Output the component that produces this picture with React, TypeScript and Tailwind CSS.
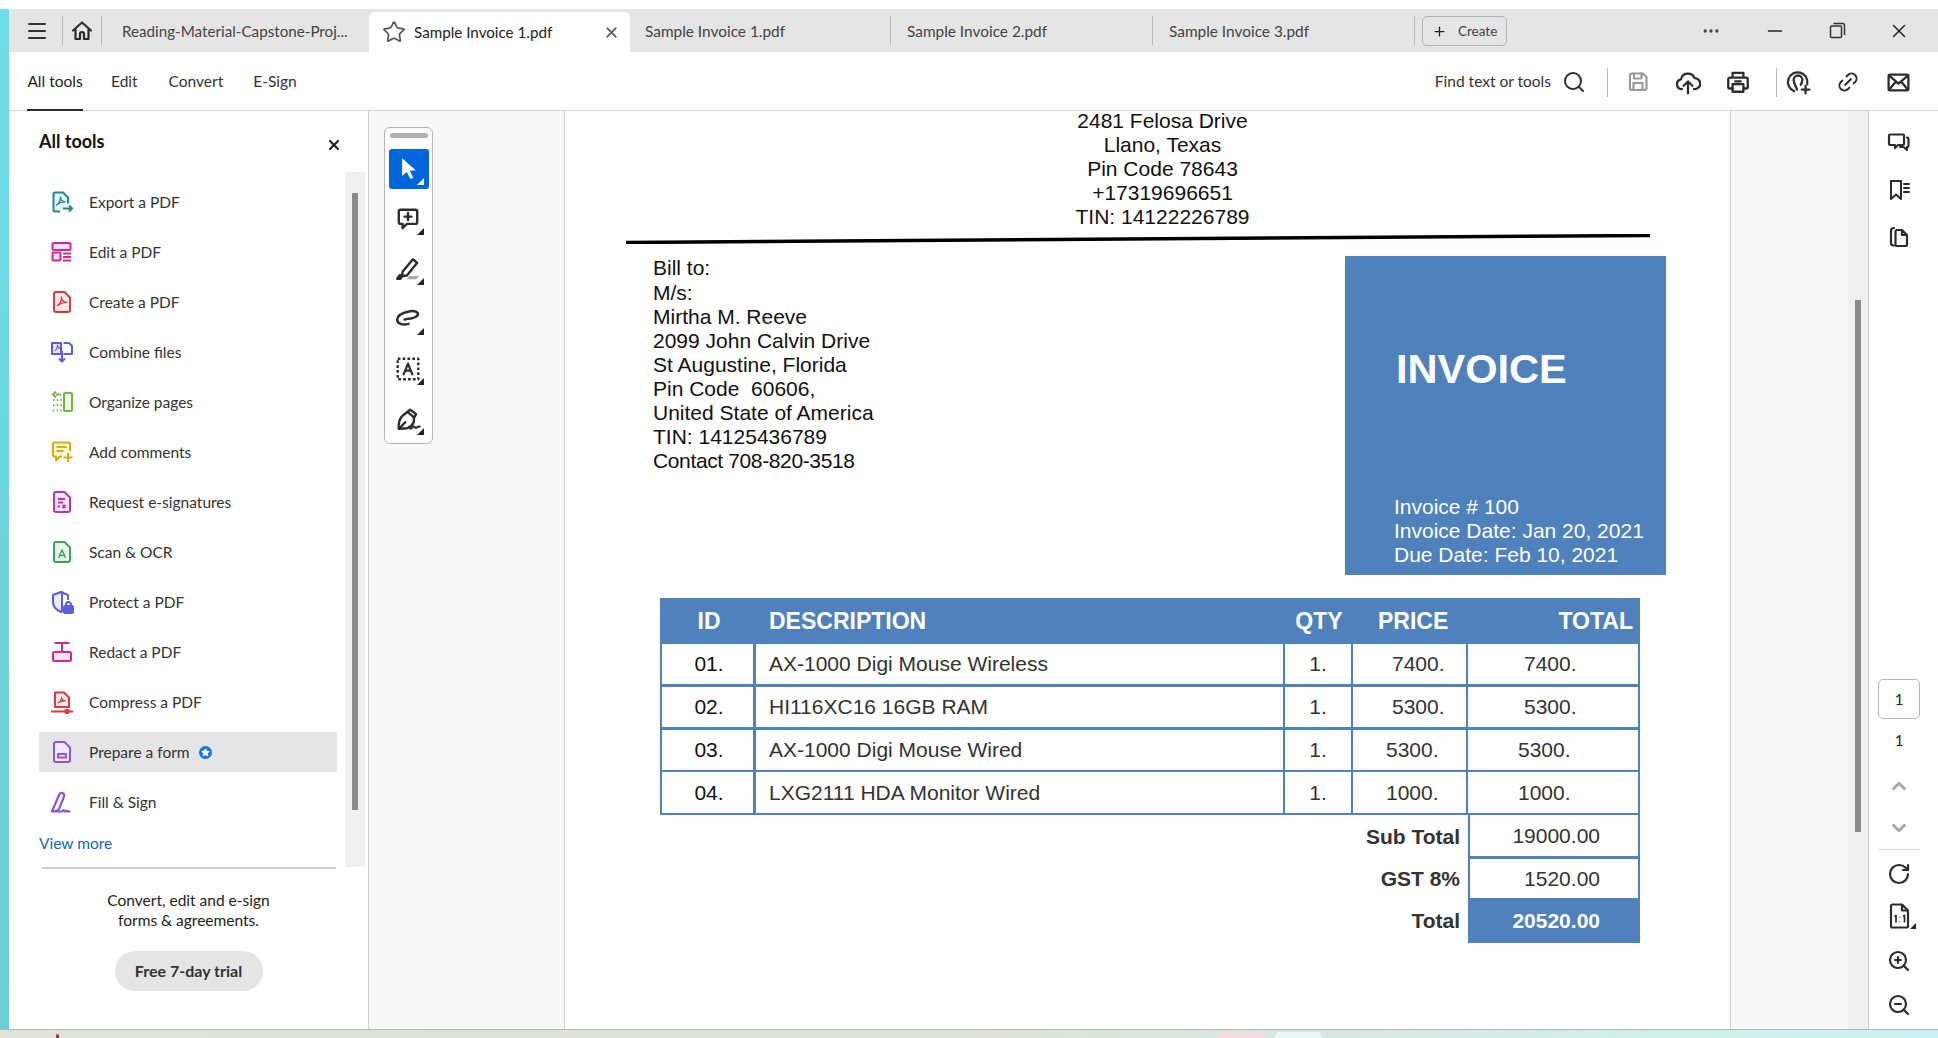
import React from "react";
import { Menu, Star, X, Plus, Search, ChevronUp, ChevronDown, RotateCw, ZoomIn, ZoomOut, Link2, MoreHorizontal, Minus } from "lucide-react";

const ui = "font-['Lato','Open_Sans',sans-serif]";
const doc = "font-['Liberation_Sans',Arial,sans-serif]";

type SP = { c: string; f?: string };
const Doc = ({ c, f, children }: SP & { children?: React.ReactNode }) => (
  <svg width="24" height="24" viewBox="0 0 24 24" fill="none" stroke={c} strokeWidth="2" strokeLinejoin="round">
    <path d="M4 4a2 2 0 0 1 2-2h8.500L20 7.500V20a2 2 0 0 1-2 2H6a2 2 0 0 1-2-2z" fill={f || "none"} />
    {children}
  </svg>
);
const Acro = ({ c }: { c: string }) => <path d="M7.500 15.500c2.500-1.500 4-5 4-8.500 0 3 2 5 5 5.500-3-.5-6 1-9 3z" stroke={c} strokeWidth="1.300" fill="none" />;

const sidebarIcons: React.ReactNode[] = [
  <svg key="0" width="24" height="24" viewBox="0 0 24 24" fill="none" stroke="#1d8a8f" strokeWidth="2" strokeLinejoin="round"><path d="M10 21.500H5a1.500 1.500 0 0 1-1.500-1.500V4A1.500 1.500 0 0 1 5 2.500h8l5 5v6" fill="#e6f3f3" /><path d="M6.500 15c2.500-1.500 4-4.500 4-8 0 3 1.500 4.500 4.500 5-3-.5-6 1-8.500 3z" strokeWidth="1.300" /><path d="M13 18.500h9M19 15.500l3 3-3 3" /></svg>,
  <svg key="1" width="24" height="24" viewBox="0 0 24 24" fill="none" stroke="#d3278f" strokeWidth="2"><rect x="2.500" y="3" width="18" height="7" rx="1" fill="#fbe3f1" /><rect x="2.500" y="12.500" width="8" height="8" rx="1" fill="#fbe3f1" /><path d="M13 13.500h8M13 17h8M13 20.500h8" /></svg>,
  <Doc key="2" c="#db3a44" f="#fce8e9"><Acro c="#db3a44" /></Doc>,
  <svg key="3" width="24" height="24" viewBox="0 0 24 24" fill="none" stroke="#5c5ce0" strokeWidth="2" strokeLinejoin="round"><path d="M11 3H2v11h9z" fill="#eaeafc" /><path d="M13.500 3H19l3 3v8h-8.500" /><path d="M4.500 11c2-1 3-3 3-6 0 2 1 3 2.500 3.500" strokeWidth="1.100" /><path d="M12 11v10M9 18.500l3 3 3-3" /></svg>,
  <svg key="4" width="24" height="24" viewBox="0 0 24 24" fill="none" stroke="#6fb93f" strokeWidth="2"><rect x="14" y="3" width="8" height="18" rx="1" fill="#eef8e7" /><path d="M11 4.500H6M6 1.500l-3 3 3 3" /><path d="M3 10h9M3 15h9M3 20.500h9" strokeDasharray="1.500 2.200" /></svg>,
  <svg key="5" width="24" height="24" viewBox="0 0 24 24" fill="none" stroke="#d6ad00" strokeWidth="2" strokeLinejoin="round"><path d="M20 11V4a1.500 1.500 0 0 0-1.500-1.500h-14A1.500 1.500 0 0 0 3 4v11a1.500 1.500 0 0 0 1.500 1.500H6v4l4-4h2" fill="#fdf6d4" /><path d="M6.500 7h10M6.500 11h7M18 13v9M13.500 17.500h9" /></svg>,
  <Doc key="6" c="#b633c3" f="#f7e6f9"><path d="M8 9h7M8 12.500h5" /><path d="M7.500 16.500h2.500M12.500 15l3 3M15.500 15l-3 3" /></Doc>,
  <Doc key="7" c="#3aa655" f="#e8f6ec"><path d="M8.500 18l3.500-8 3.500 8M9.800 15.500h4.400" strokeWidth="1.400" /></Doc>,
  <svg key="8" width="24" height="24" viewBox="0 0 24 24" fill="none" stroke="#5c5ce0" strokeWidth="2" strokeLinejoin="round"><path d="M11 2 3 5v7c0 4.500 3 8 8 10l1-.4V2z" fill="#eaeafc" /><path d="M11 2l7 3v5" /><rect x="14" y="16" width="9" height="7" rx="1" fill="#5c5ce0" /><path d="M16 16v-1.500a2.500 2.500 0 0 1 5 0V16" /></svg>,
  <svg key="9" width="24" height="24" viewBox="0 0 24 24" fill="none" stroke="#d3278f" strokeWidth="2"><path d="M4.500 3h15M12 3v8" /><rect x="3" y="12" width="18" height="9" rx="1.500" fill="#fbe3f1" /></svg>,
  <svg key="10" width="24" height="24" viewBox="0 0 24 24" fill="none" stroke="#db3a44" strokeWidth="2" strokeLinejoin="round"><path d="M5 2.500h9l5 5V17H5z" fill="#fce8e9" /><path d="M8 13c2-1 3.500-3.500 3.500-6 0 2 1.500 3.500 4 4-2.500-.5-5 .5-7.500 2z" strokeWidth="1.100" /><path d="M1 21.500h22" /><circle cx="17" cy="21.500" r="1.800" fill="#db3a44" /></svg>,
  <Doc key="11" c="#8e55d6" f="#f1e9fb"><rect x="8" y="14" width="8" height="3.500" /></Doc>,
  <svg key="12" width="24" height="24" viewBox="0 0 24 24" fill="none" stroke="#8e55d6" strokeWidth="2.200" strokeLinejoin="round" strokeLinecap="round"><path d="M2 21.500 9 5c1.500-3.500 6-2 5 1.500L9 19c-1 2-4.500 2.500-7 2.500h10c1 0 1-2 2-1s1 1.500 2 .5 1 1 3.500.5" /></svg>,
];

const items = ["Export a PDF", "Edit a PDF", "Create a PDF", "Combine files", "Organize pages", "Add comments", "Request e-signatures", "Scan & OCR", "Protect a PDF", "Redact a PDF", "Compress a PDF", "Prepare a form", "Fill & Sign"];

const Corner = ({ white }: { white?: boolean }) => (
  <svg width="7" height="7" viewBox="0 0 7 7" className="absolute right-[5px] bottom-[4px]"><path d="M7 0v7H0z" fill={white ? "#fff" : "#222"} /></svg>
);

const Tool = ({ children, active }: { children: React.ReactNode; active?: boolean }) => (
  <div className={`relative w-[40px] h-[40px] ml-[4px] mb-[10px] flex items-center justify-center rounded-[3px] pr-[3px] ${active ? "bg-[#0265dc]" : ""}`}>
    {children}
    <Corner white={active} />
  </div>
);

const Sep = () => <div className="w-px h-[29px] bg-[#b8b8b8]" />;

const rows = [
  { id: "01.", d: "AX-1000 Digi Mouse Wireless", p: "7400.", t: "7400.", pp: "pl-[39px]", tp: "pl-[56px]", h: "h-[43px]", b: "border-b-[3px]" },
  { id: "02.", d: "HI116XC16 16GB RAM", p: "5300.", t: "5300.", pp: "pl-[39px]", tp: "pl-[56px]", h: "h-[43px]", b: "border-b-[3px]" },
  { id: "03.", d: "AX-1000 Digi Mouse Wired", p: "5300.", t: "5300.", pp: "pl-[33px]", tp: "pl-[50px]", h: "h-[42px]", b: "border-b-[2px]" },
  { id: "04.", d: "LXG2111 HDA Monitor Wired", p: "1000.", t: "1000.", pp: "pl-[33px]", tp: "pl-[50px]", h: "h-[43px]", b: "border-b-[2px]" },
];

const Black = ({ children, w = 24, sw = 1.8, c = "#2c2c2c" }: { children: React.ReactNode; w?: number; sw?: number; c?: string }) => (
  <svg width={w} height={w} viewBox="0 0 24 24" fill="none" stroke={c} strokeWidth={sw} strokeLinejoin="round" strokeLinecap="round">{children}</svg>
);

export default function App() {
  return (
    <div className={`w-[1938px] h-[1038px] flex flex-col bg-white text-[#2c2c2c] ${ui}`}>
      <div className="h-[9px] shrink-0 bg-white" />
      <div className="flex h-[1020px] shrink-0">
        <div className="w-[9px] shrink-0 bg-gradient-to-b from-[#6fdde6] to-[#6ccdd5]" />
        <div className="w-[1929px] flex flex-col">
          {/* Tab bar */}
          <div className="h-[43px] shrink-0 bg-[#e5e5e5] flex items-end text-[15.400px]">
            <div className="h-[43px] w-[53px] flex items-center justify-center pl-[3px]"><Menu size={24} strokeWidth={2} color="#333" /></div>
            <div className="h-[43px] flex items-center"><Sep /></div>
            <div className="h-[43px] w-[38px] flex items-center justify-center"><Black w={24} sw={2.200}><path d="M3 11.500 12 3.500l9 8M5.500 10v10h4.500v-5a2 2 0 0 1 4 0v5h4.500V10" /></Black></div>
            <div className="h-[43px] flex items-center"><Sep /></div>
            <div className="h-[43px] w-[267px] pl-[20px] pt-[2px] flex items-center text-[#444] text-[15.200px]">Reading-Material-Capstone-Proj...</div>
            <div className="h-[40px] w-[261px] bg-white rounded-t-[5px] flex items-center pl-[13px] pr-[10px]">
              <Star size={24} strokeWidth={1.700} color="#555" />
              <span className="ml-[8px] text-[#222] text-[15.200px]">Sample Invoice 1.pdf</span>
              <X size={17} strokeWidth={2.600} color="#666" className="ml-auto" />
            </div>
            <div className="h-[43px] w-[261px] pl-[15px] flex items-center justify-between text-[#444]"><span className="pt-[2px]">Sample Invoice 1.pdf</span><Sep /></div>
            <div className="h-[43px] w-[262px] pl-[16px] flex items-center justify-between text-[#444]"><span className="pt-[2px]">Sample Invoice 2.pdf</span><Sep /></div>
            <div className="h-[43px] w-[262px] pl-[16px] flex items-center justify-between text-[#444]"><span className="pt-[2px]">Sample Invoice 3.pdf</span><Sep /></div>
            <div className="h-[43px] flex items-center ml-[7px] pt-[1px]">
              <div className="w-[85px] h-[30px] border border-[#b3b3b3] rounded-[5px] flex items-center pl-[9px] text-[13.500px] text-[#444]">
                <Plus size={15} strokeWidth={2} color="#222" /><span className="ml-[11px]">Create</span>
              </div>
            </div>
            <div className="h-[43px] flex items-center ml-[194px]"><MoreHorizontal size={20} strokeWidth={2} color="#444" /></div>
            <div className="h-[43px] flex items-center ml-[43px]"><Minus size={22} strokeWidth={1.800} color="#222" /></div>
            <div className="h-[43px] flex items-center ml-[43px]">
              <svg width="17" height="17" viewBox="0 0 17 17" fill="none" stroke="#333" strokeWidth="1.500"><rect x="1.500" y="4" width="11" height="11.500" rx="1" /><path d="M4.500 1.500h9.500a1.500 1.500 0 0 1 1.500 1.500v10" /></svg>
            </div>
            <div className="h-[43px] flex items-center ml-[42px]"><X size={22} strokeWidth={1.600} color="#222" /></div>
          </div>
          {/* Toolbar */}
          <div className="h-[59px] shrink-0 border-b border-[#d5d5d5] flex text-[15.500px] text-[#333]">
            <div className="ml-[18px] h-[59px] w-[56px] border-b-[2px] border-[#2c2c2c] flex items-center justify-center text-[#222] pt-[2px]">All tools</div>
            <div className="ml-[28px] flex items-center pt-[2px]">Edit</div>
            <div className="ml-[31px] flex items-center pt-[2px]">Convert</div>
            <div className="ml-[30px] flex items-center pt-[2px]">E-Sign</div>
            <div className="flex items-center ml-auto pt-[2px]">
              <span>Find text or tools</span>
              <Search size={24} strokeWidth={2} color="#2c2c2c" className="ml-[11px]" />
              <div className="ml-[21px]"><Sep /></div>
              <div className="ml-[18px]"><Black w={24} sw={2.200} c="#999"><path d="M4 5.500A2 2 0 0 1 6 3.500h11l3.500 3.500v11a2 2 0 0 1-2 2H6a2 2 0 0 1-2-2z" /><path d="M8 3.500v5h7.500v-5M7.500 20v-7h9v7" /></Black></div>
              <div className="ml-[25px]"><Black w={26} sw={2.100}><path d="M6.500 18.500H6A4.500 4.500 0 0 1 5.500 9.600 6.500 6.500 0 0 1 18 8.500a5 5 0 0 1 .5 10h-1M12 22.500V11.500M8 15.500l4-4 4 4" /></Black></div>
              <div className="ml-[24px]"><Black w={26} sw={2.100}><path d="M7 8V3.500h10V8M7 18H4.500A1.500 1.500 0 0 1 3 16.500V9.500A1.500 1.500 0 0 1 4.500 8h15A1.500 1.500 0 0 1 21 9.500v7a1.500 1.500 0 0 1-1.500 1.500H17" /><path d="M7 14h10v7H7zM9.500 11.500h5" /></Black></div>
              <div className="ml-[25px]"><Sep /></div>
              <div className="ml-[8px]"><Black w={26} sw={2.100}><path d="M8.500 20.500a9 9 0 1 1 12-6.500M11 19c-1-4-3-5-3-9a4 4 0 0 1 8 0c0 1.500-.5 3-1.500 4.500M19 15.500v7M15.500 19h7" /></Black></div>
              <div className="ml-[25px]"><Link2 size={24} strokeWidth={2} color="#2c2c2c" className="-rotate-45" /></div>
              <div className="ml-[26px] mr-[27px]"><Black w={25} sw={2.200}><rect x="2.500" y="4.500" width="19" height="15" rx="1.500" /><path d="M3 5.500l9 7.500 9-7.500M3 19l6.500-8M21 19l-6.500-8" /></Black></div>
            </div>
          </div>
          {/* Body */}
          <div className="flex h-[918px] shrink-0">
            {/* Sidebar */}
            <div className="w-[360px] shrink-0 border-r border-[#cfcfcf] flex flex-col">
              <div className="h-[61px] shrink-0 flex items-start pl-[30px] pr-[26px] pt-[17px] justify-between">
                <span className="text-[18px] leading-[26px] font-bold text-[#111]">All tools</span>
                <X size={16} strokeWidth={3.200} color="#222" className="mt-[9px]" />
              </div>
              <div className="flex h-[695px] shrink-0">
                <div className="w-[337px] pt-[5px]">
                  {items.map((t, i) => (
                    <div key={t} className="h-[50px] flex items-center">
                      <div className={`ml-[30px] w-[298px] h-[40px] rounded-[4px] pl-[12px] flex items-center text-[15.500px] ${t === "Prepare a form" ? "bg-[#e5e5e5]" : ""}`}>
                        <span className="w-[24px] h-[24px] -ml-[1px] flex">{sidebarIcons[i]}</span>
                        <span className="ml-[15px] pt-[2px] text-[#333]">{t}</span>
                        {t === "Prepare a form" && (
                          <span className="ml-[9px] w-[13px] h-[13px] rounded-full bg-[#1473e6] flex items-center justify-center"><Star size={9} fill="#fff" color="#fff" /></span>
                        )}
                      </div>
                    </div>
                  ))}
                  <div className="ml-[30px] h-[32px] pt-[2px] flex items-center text-[15.500px] text-[#1565c0]">View more</div>
                </div>
                <div className="w-[20px] ml-[-1px] bg-[#f0f0f0]">
                  <div className="ml-[7px] mt-[21px] w-[6px] h-[617px] bg-[#8a8a8a]" />
                </div>
              </div>
              <div className="ml-[33px] w-[294px] h-[2px] bg-[#cfcfcf] shrink-0" />
              <div className="text-center text-[15.500px] leading-[20px] text-[#222] mt-[21px]">Convert, edit and e-sign<br />forms &amp; agreements.</div>
              <div className="mt-[21px] mx-auto w-[148px] h-[40px] rounded-full bg-[#e5e5e5] flex items-center justify-center text-[16px] font-bold text-[#333] pb-[1px]">Free 7-day trial</div>
            </div>
            {/* Tool rail */}
            <div className="w-[196px] shrink-0 bg-[#f8f8f8] border-r border-[#cfcfcf] pl-[15px] pt-[16px]">
              <div className="w-[49px] h-[317px] bg-white border border-[#b5b5b5] rounded-[6px] pt-[5px]">
                <div className="ml-[5px] w-[38px] h-[5px] rounded-full bg-[#b0b0b0] mb-[11px]" />
                <Tool active><svg width="24" height="26" viewBox="0 0 20 22"><path d="M5 2v15l4-3.500 3 6 2.500-1.200-3-5.800 5-.5z" fill="#fff" /></svg></Tool>
                <Tool><Black w={26} sw={2.200}><path d="M5 3.500h14a1.500 1.500 0 0 1 1.500 1.500v10a1.500 1.500 0 0 1-1.500 1.500H11l-4 4v-4H5A1.500 1.500 0 0 1 3.500 15V5A1.500 1.500 0 0 1 5 3.500zM12 6.500v6.500M8.800 9.800h6.400" /></Black></Tool>
                <Tool><Black w={26} sw={2.200}><path d="M7 14.500 16.500 3l4 3.300L11 18l-4.500.5z" /><path d="M2 21h3l1.500-2-2-1.500z" fill="#2c2c2c" /><path d="M11 21.500l2-3h9l-2 3z" fill="#aaa" stroke="none" /></Black></Tool>
                <Tool><Black w={26} sw={2.300}><path d="M9 12.500c3-1 9-.5 12-4 1-3-3-4.500-8-3.500S2 8.500 2 12.500s5 5.500 10.500 4" /></Black></Tool>
                <Tool><Black w={26} sw={2.200}><rect x="2.500" y="2.500" width="19" height="19" strokeDasharray="2.500 2" strokeLinecap="butt" /><path d="M8 17l4-10 4 10M9.500 13.500h5" strokeWidth="2" /></Black></Tool>
                <Tool><Black w={26} sw={2.200}><path d="M14 3.500l5.500 4-2 3.500c.5 4-1 7.500-6 9.500L3.500 21c-.5-5 .5-9.500 4-12.500z" /><path d="M11.500 5.500l6 5M3.500 21l6-6" /><path d="M14 21c2 0 3-3 4-2s1 2 2 1 2-1 3-1" strokeWidth="1.800" /></Black></Tool>
              </div>
            </div>
            {/* Document page */}
            <div className={`w-[1166px] shrink-0 border-r border-[#cfcfcf] ${doc} text-[21px] leading-[24.100px] text-[#111]`}>
              <div className="ml-[61px] -mt-[2px] w-[1073px] text-center">
                <div>2481 Felosa Drive</div>
                <div>Llano, Texas</div>
                <div>Pin Code 78643</div>
                <div>+17319696651</div>
                <div>TIN: 14122226789</div>
              </div>
              <svg width="1030" height="10" viewBox="0 0 1030 10" className="ml-[61px] mt-[5px]"><path d="M0 8.500 1024 1.500" stroke="#000" strokeWidth="3.500" /></svg>
              <div className="flex mt-[12px] ml-[88px]">
                <div className="w-[692px]">
                  <div>Bill to:</div>
                  <div>M/s:</div>
                  <div>Mirtha M. Reeve</div>
                  <div>2099 John Calvin Drive</div>
                  <div>St Augustine, Florida</div>
                  <div className="whitespace-pre">Pin Code  60606,</div>
                  <div>United State of America</div>
                  <div>TIN: 14125436789</div>
                  <div className="tracking-[-0.37px]">Contact 708-820-3518</div>
                </div>
                <div className="w-[321px] h-[319px] bg-[#4f81bd] text-white pl-[49px] flex flex-col">
                  <div className="mt-[88px] text-[41.500px] leading-[50px] font-bold ml-[2px]">INVOICE</div>
                  <div className="mt-[101px] text-[21px] leading-[23.600px]">
                    <div>Invoice # 100</div>
                    <div>Invoice Date: Jan 20, 2021</div>
                    <div>Due Date: Feb 10, 2021</div>
                  </div>
                </div>
              </div>
              {/* Table */}
              <div className="ml-[95px] mt-[23px] w-[980px] text-[21px] text-[#333]">
                <div className="h-[46px] bg-[#4f81bd] text-white font-bold text-[23px] grid grid-cols-[96px_529px_68px_115px_172px] items-center">
                  <div className="text-center pl-[2px]">ID</div>
                  <div className="pl-[13px]">DESCRIPTION</div>
                  <div className="text-center">QTY</div>
                  <div className="pl-[25px]">PRICE</div>
                  <div className="text-right pr-[7px]">TOTAL</div>
                </div>
                {rows.map((r) => (
                  <div key={r.id} className={`${r.h} box-border grid grid-cols-[94px_529px_68px_115px_170px] border-[#4f81bd] ${r.b} border-l-[2px] border-r-[2px]`}>
                    <div className="flex items-center justify-center border-r-[3px] border-[#4f81bd] text-[#111] pl-[3px]">{r.id}</div>
                    <div className="flex items-center pl-[13px] border-r-[2px] border-[#4f81bd]">{r.d}</div>
                    <div className="flex items-center justify-center border-r-[2px] border-[#4f81bd]">1.</div>
                    <div className={`flex items-center ${r.pp} border-r-[2px] border-[#4f81bd]`}>{r.p}</div>
                    <div className={`flex items-center ${r.tp}`}>{r.t}</div>
                  </div>
                ))}
                <div className="flex h-[44px] justify-end">
                  <div className="flex items-center font-bold mr-[8px]">Sub Total</div>
                  <div className="w-[172px] border-l-[2px] border-r-[2px] border-b-[3px] border-[#4f81bd] flex items-center justify-end pr-[38px]">19000.00</div>
                </div>
                <div className="flex h-[39px] justify-end">
                  <div className="flex items-center font-bold mr-[8px]">GST 8%</div>
                  <div className="w-[172px] border-l-[2px] border-r-[2px] border-[#4f81bd] flex items-center justify-end pr-[38px]">1520.00</div>
                </div>
                <div className="flex h-[45px] justify-end">
                  <div className="flex items-center font-bold mr-[8px]">Total</div>
                  <div className="w-[172px] bg-[#4f81bd] text-white font-bold flex items-center justify-end pr-[40px]">20520.00</div>
                </div>
              </div>
            </div>
            {/* Gray margin + scrollbar */}
            <div className="w-[117px] shrink-0 bg-[#f8f8f8]" />
            <div className="w-[21px] shrink-0 bg-[#f0f0f0] border-r border-[#cfcfcf]">
              <div className="ml-[7px] mt-[189px] w-[6px] h-[532px] bg-[#8a8a8a]" />
            </div>
            {/* Right panel */}
            <div className="flex-1 flex flex-col items-center pr-[9px] text-[15px] text-[#222]">
              <div className="mt-[19px]"><Black w={24} sw={2.200}><path d="M3 4.500h13a1 1 0 0 1 1 1V14a1 1 0 0 1-1 1h-5l-3 3v-3H3a1 1 0 0 1-1-1V5.500a1 1 0 0 1 1-1zM20 7.500c1 0 1.500.5 1.500 1.500v7a1 1 0 0 1-1 1H20v3l-3.500-3H13" /></Black></div>
              <div className="mt-[24px]"><Black w={24} sw={2}><path d="M4 3h10v18l-5-4.500L4 21zM17 6h5M17 10h5M17 14h5" /></Black></div>
              <div className="mt-[23px]"><Black w={24} sw={2.200}><path d="M7 3C4.500 3 4 4 4 6v12c0 1.500 1 2.500 2.500 2.500M9.500 5H15l5 5v10a1 1 0 0 1-1 1h-9a1.500 1.500 0 0 1-1.500-1.500V6.500A1.500 1.500 0 0 1 9.500 5zM15 5v5h5" /></Black></div>
              <div className="mt-[430px] w-[42px] h-[40px] shrink-0 rounded-[5px] border border-[#b5b5b5] flex items-center justify-center">1</div>
              <div className="mt-[10px] h-[22px] flex items-center">1</div>
              <ChevronUp size={22} strokeWidth={3} color="#a5a5a5" className="mt-[24px]" />
              <ChevronDown size={22} strokeWidth={3} color="#a5a5a5" className="mt-[20px]" />
              <div className="mt-[10px] w-[41px] h-px bg-[#d5d5d5] shrink-0" />
              <RotateCw size={24} strokeWidth={2.200} color="#2c2c2c" className="mt-[12px]" />
              <div className="relative mt-[17px] w-[34px] h-[26px] flex justify-center">
                <svg width="24" height="26" viewBox="0 0 24 26" fill="none" stroke="#2c2c2c" strokeWidth="2.200" strokeLinejoin="round"><path d="M4 3a1.500 1.500 0 0 1 1.500-1.500H15L21 7.500V23a1.500 1.500 0 0 1-1.500 1.500h-14A1.500 1.500 0 0 1 4 23z" /><path d="M15 1.500v6h6" /><path d="M7.500 13.500 9 12.500v7M16 13.500l1.500-1v7M12.700 14.500v.6M12.700 18v.6" strokeWidth="1.700" /></svg>
                <svg width="6" height="6" viewBox="0 0 6 6" className="absolute right-0 bottom-0"><path d="M6 0v6H0z" fill="#222" /></svg>
              </div>
              <ZoomIn size={24} strokeWidth={2.200} color="#2c2c2c" className="mt-[20px]" />
              <ZoomOut size={24} strokeWidth={2.200} color="#2c2c2c" className="mt-[20px]" />
            </div>
          </div>
        </div>
      </div>
      {/* Bottom wallpaper strip */}
      <div className="h-[9px] shrink-0 border-t border-[#b5b5b5] bg-gradient-to-r from-[#dfe3d8] via-[#dde3d6] via-50% to-[#c8f3f2] flex items-end">
        <div className="ml-[56px] w-[3px] h-[4px] bg-[#a33] rounded-t-[2px]" />
        <div className="ml-[1159px] w-[47px] h-[6px] bg-[#f5dbe0] rounded-t-[4px]" />
        <div className="ml-[10px] w-[47px] h-[6px] bg-[#e3f7fa] rounded-t-[4px]" />
      </div>
    </div>
  );
}
